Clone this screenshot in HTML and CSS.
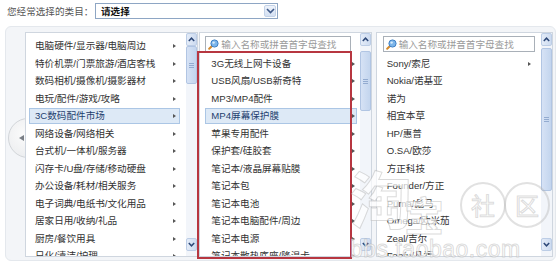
FILE: index.html
```html
<!DOCTYPE html>
<html lang="zh-CN">
<head>
<meta charset="utf-8">
<title>类目选择</title>
<link rel="stylesheet" href="styles.css">
</head>
<body>
<div class="top">
  <span class="label">您经常选择的类目：</span>
  <div class="select">
    <span class="select-text">请选择</span>
    <span class="select-btn"><svg width="9" height="6" viewBox="0 0 9 6"><path d="M1 1 L4.5 4.5 L8 1" fill="none" stroke="#3f5a8a" stroke-width="1.6"/></svg></span>
  </div>
</div>

<div class="picker">
  <div class="nav-left"><span class="nav-arrow"></span></div>

  <div class="col col1">
    <div class="list">
      <div class="item">电脑硬件/显示器/电脑周边<i class="tri"></i></div>
      <div class="item">特价机票/门票旅游/酒店客栈<i class="tri"></i></div>
      <div class="item">数码相机/摄像机/摄影器材<i class="tri"></i></div>
      <div class="item">电玩/配件/游戏/攻略<i class="tri"></i></div>
      <div class="item active">3C数码配件市场<i class="tri"></i></div>
      <div class="item">网络设备/网络相关<i class="tri"></i></div>
      <div class="item">台式机/一体机/服务器<i class="tri"></i></div>
      <div class="item">闪存卡/U盘/存储/移动硬盘<i class="tri"></i></div>
      <div class="item">办公设备/耗材/相关服务<i class="tri"></i></div>
      <div class="item">电子词典/电纸书/文化用品<i class="tri"></i></div>
      <div class="item">居家日用/收纳/礼品<i class="tri"></i></div>
      <div class="item">厨房/餐饮用具<i class="tri"></i></div>
      <div class="item">日化/清洁/护理<i class="tri"></i></div>
    </div>
    <div class="sbar">
      <div class="sbtn"><svg width="7" height="5" viewBox="0 0 7 5"><path d="M0.8 4 L3.5 1.2 L6.2 4" fill="none" stroke="#2d4878" stroke-width="1.5"/></svg></div>
      <div class="track"><div class="thumb thumb1"></div></div>
      <div class="sbtn"><svg width="7" height="5" viewBox="0 0 7 5"><path d="M0.8 1 L3.5 3.8 L6.2 1" fill="none" stroke="#2d4878" stroke-width="1.5"/></svg></div>
    </div>
  </div>

  <div class="col col2">
    <div class="list">
      <div class="search"><svg class="mag" width="11" height="11" viewBox="0 0 11 11"><line x1="4" y1="7" x2="1.2" y2="9.8" stroke="#d48a2c" stroke-width="2" stroke-linecap="round"/><circle cx="6.5" cy="4.5" r="3.6" fill="#7db6ea" stroke="#3d7fc4" stroke-width="1"/><circle cx="5.6" cy="3.6" r="1.2" fill="#d9ecfb"/></svg><span>输入名称或拼音首字母查找</span></div>
      <div class="item">3G无线上网卡设备<i class="tri"></i></div>
      <div class="item">USB风扇/USB新奇特<i class="tri"></i></div>
      <div class="item">MP3/MP4配件<i class="tri"></i></div>
      <div class="item active">MP4屏幕保护膜<i class="tri"></i></div>
      <div class="item">苹果专用配件<i class="tri"></i></div>
      <div class="item">保护套/硅胶套<i class="tri"></i></div>
      <div class="item">笔记本/液晶屏幕贴膜<i class="tri"></i></div>
      <div class="item">笔记本包<i class="tri"></i></div>
      <div class="item">笔记本电池<i class="tri"></i></div>
      <div class="item">笔记本电脑配件/周边<i class="tri"></i></div>
      <div class="item">笔记本电源<i class="tri"></i></div>
      <div class="item">笔记本散热底座/降温卡<i class="tri"></i></div>
    </div>
    <div class="sbar">
      <div class="sbtn"><svg width="7" height="5" viewBox="0 0 7 5"><path d="M0.8 4 L3.5 1.2 L6.2 4" fill="none" stroke="#2d4878" stroke-width="1.5"/></svg></div>
      <div class="track"><div class="thumb thumb2"></div></div>
      <div class="sbtn"><svg width="7" height="5" viewBox="0 0 7 5"><path d="M0.8 1 L3.5 3.8 L6.2 1" fill="none" stroke="#2d4878" stroke-width="1.5"/></svg></div>
    </div>
    <div class="mark"></div>
  </div>

  <div class="col col3">
    <div class="list">
      <div class="search"><svg class="mag" width="11" height="11" viewBox="0 0 11 11"><line x1="4" y1="7" x2="1.2" y2="9.8" stroke="#d48a2c" stroke-width="2" stroke-linecap="round"/><circle cx="6.5" cy="4.5" r="3.6" fill="#7db6ea" stroke="#3d7fc4" stroke-width="1"/><circle cx="5.6" cy="3.6" r="1.2" fill="#d9ecfb"/></svg><span>输入名称或拼音首字母查找</span></div>
      <div class="item">Sony/索尼<i class="tri"></i></div>
      <div class="item">Nokia/诺基亚</div>
      <div class="item">诺为</div>
      <div class="item">相宜本草</div>
      <div class="item">HP/惠普</div>
      <div class="item">O.SA/欧莎</div>
      <div class="item">方正科技</div>
      <div class="item">Founder/方正</div>
      <div class="item">Puma/彪马</div>
      <div class="item">Omega/欧米茄</div>
      <div class="item">Zeal/吉尔</div>
      <div class="item">Fanfu/凡福</div>
    </div>
    <div class="sbar">
      <div class="sbtn"><svg width="7" height="5" viewBox="0 0 7 5"><path d="M0.8 4 L3.5 1.2 L6.2 4" fill="none" stroke="#2d4878" stroke-width="1.5"/></svg></div>
      <div class="track"><div class="thumb thumb3"></div></div>
      <div class="sbtn"><svg width="7" height="5" viewBox="0 0 7 5"><path d="M0.8 1 L3.5 3.8 L6.2 1" fill="none" stroke="#2d4878" stroke-width="1.5"/></svg></div>
    </div>
  </div>

  <div class="watermark">
    <span class="wm-big">淘</span>
    <span class="wm-mid">宝</span>
    <span class="wm-bub wm-b1">社</span>
    <span class="wm-bub wm-b2">区</span>
    <span class="wm-url">bbs.taobao.com</span>
  </div>
</div>
</body>
</html>
```

FILE: styles.css
```css
* { box-sizing: border-box; }
html, body {
  margin: 0;
  padding: 0;
  width: 558px;
  height: 265px;
  overflow: hidden;
  background: #ffffff;
  font-family: "Liberation Sans", "Noto Sans CJK SC", sans-serif;
  font-size: 9.6px;
  color: #333333;
}

.top {
  display: flex;
  align-items: center;
  height: 22px;
  padding-left: 7px;
}
.label {
  color: #555555;
  width: 88px;
  white-space: nowrap;
}
.select {
  display: flex;
  align-items: center;
  justify-content: space-between;
  width: 183px;
  height: 16px;
  border: 1px solid #8ea6c4;
  background: #ffffff;
  padding: 0 1px 0 5px;
}
.select-text {
  color: #111111;
  font-weight: bold;
}
.select-btn {
  display: flex;
  align-items: center;
  justify-content: center;
  width: 12px;
  height: 12px;
  border: 1px solid #c3d2e8;
  border-radius: 2px;
  background: linear-gradient(#eef3fb, #d4e0f2);
}

.picker {
  position: relative;
  display: flex;
  margin: 4px 0 0 5px;
  width: 551px;
  height: 235px;
  padding: 5px 2px 4px 19px;
  background: #f3f5f8;
  border: 1px solid #e4e8ed;
  border-radius: 6px;
}

.nav-left {
  position: absolute;
  left: 2px;
  top: 91px;
  width: 40px;
  height: 40px;
  border-radius: 50%;
  border: 1px solid #d2d5d9;
  background: radial-gradient(circle at 40% 40%, #fbfbfb, #e6e8eb);
  z-index: 0;
}
.nav-arrow {
  position: absolute;
  left: 10px;
  top: 16px;
  width: 0;
  height: 0;
  border-top: 3.5px solid transparent;
  border-bottom: 3.5px solid transparent;
  border-right: 5px solid #7a7f86;
}

.col {
  position: relative;
  z-index: 1;
  display: flex;
  height: 225px;
  border: 1px solid #cfd6df;
  background: #ffffff;
}
.col1 { width: 174px; margin-right: 1px; }
.col2 { width: 173px; margin-right: 4px; }
.col3 { width: 178px; }

.list {
  flex: 1;
  display: flex;
  flex-direction: column;
  overflow: hidden;
}
.col1 .list { padding-top: 4.25px; }
.col2 .list, .col3 .list { padding-top: 3px; }

.item {
  flex: none;
  position: relative;
  height: 15.5px;
  margin: 1px 6px 1px 3px;
  padding-left: 5px;
  border: 1px solid transparent;
  line-height: 13.5px;
  white-space: nowrap;
  color: #333333;
}
.col2 .item { margin: 1px 3px 1px 5px; }
.col3 .item { margin: 1px 6px 1px 4px; }

.item.active {
  background: #dde9f6;
  border-color: #abc6e5;
  color: #1f3f6e;
}

.tri {
  position: absolute;
  right: 3px;
  top: 5px;
  width: 0;
  height: 0;
  border-top: 2.5px solid transparent;
  border-bottom: 2.5px solid transparent;
  border-left: 3px solid #555555;
}
.col2 .tri { right: 1px; }

.search {
  flex: none;
  display: flex;
  align-items: center;
  height: 16px;
  margin: 0 9px 2.75px 5px;
  border: 1px solid #a9b0b8;
  background: #ffffff;
  padding-left: 2px;
  color: #9a9a9a;
  white-space: nowrap;
  overflow: hidden;
}
.col3 .search { margin: 0 6px 2.75px 6px; }
.mag { flex: none; margin-right: 2px; }

.sbar {
  flex: none;
  width: 11px;
  display: flex;
  flex-direction: column;
  padding-bottom: 5px;
  background: #f2f5fa;
}
.sbtn {
  flex: none;
  height: 13px;
  display: flex;
  align-items: center;
  justify-content: center;
  border: 1px solid #bccde6;
  border-radius: 2px;
  background: linear-gradient(90deg, #e4ecf8, #cddbf0);
}
.track {
  flex: 1;
  display: flex;
  flex-direction: column;
}
.thumb {
  position: relative;
  flex: none;
  border: 1px solid #b1c5e3;
  border-radius: 2px;
  background: linear-gradient(90deg, #d6e2f5, #c3d5ee);
}
.thumb::after {
  content: "";
  position: absolute;
  left: 2px;
  right: 2px;
  top: 50%;
  height: 5px;
  margin-top: -2.5px;
  background: repeating-linear-gradient(#93abd0 0 1px, transparent 1px 2px);
}
.thumb1 { margin-top: 0; height: 38px; }
.thumb2 { margin-top: 5px; height: 60px; }
.thumb3 { margin-top: 2px; height: 143px; }

.mark {
  position: absolute;
  left: -3px;
  top: 18px;
  width: 155px;
  height: 208px;
  border: 2px solid #b73640;
  pointer-events: none;
}

.watermark {
  position: absolute;
  left: 340px;
  top: 135px;
  width: 210px;
  height: 100px;
  z-index: 2;
  pointer-events: none;
  font-family: "Noto Sans CJK SC", sans-serif;
  color: rgba(255, 255, 255, 0.7);
  -webkit-text-stroke: 1px rgba(165, 165, 165, 0.4);
}
.wm-big {
  position: absolute;
  left: 4px;
  top: 4px;
  font-size: 62px;
  font-weight: bold;
  line-height: 1;
}
.wm-mid {
  position: absolute;
  left: 58px;
  top: 32px;
  font-size: 40px;
  font-weight: bold;
  line-height: 1;
}
.wm-bub {
  position: absolute;
  top: 20px;
  width: 46px;
  height: 46px;
  border-radius: 50%;
  border: 2px solid rgba(180, 180, 180, 0.4);
  font-size: 24px;
  line-height: 42px;
  text-align: center;
  color: rgba(255, 255, 255, 0.6);
  -webkit-text-stroke: 1px rgba(165, 165, 165, 0.4);
}
.wm-b1 { left: 114px; }
.wm-b2 { left: 158px; }
.wm-url {
  position: absolute;
  left: 4px;
  top: 76px;
  font-family: "Liberation Sans", sans-serif;
  font-size: 23px;
  line-height: 1;
  letter-spacing: 0.5px;
}
```
